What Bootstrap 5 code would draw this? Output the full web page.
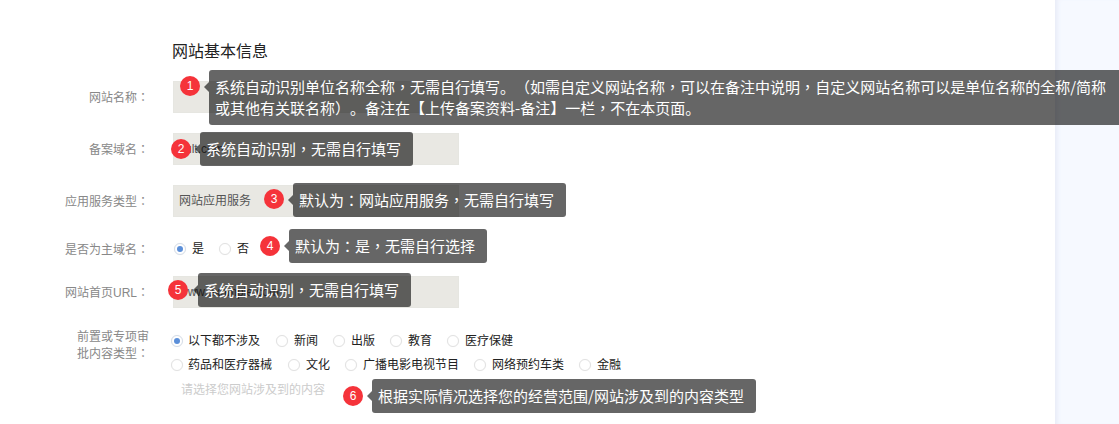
<!DOCTYPE html>
<html lang="zh-CN">
<head>
<meta charset="utf-8">
<title>网站基本信息</title>
<link rel="stylesheet" href="https://cdn.jsdelivr.net/npm/bootstrap@5.3.0/dist/css/bootstrap.min.css">
<style>
html,body{height:424px;overflow:hidden;background:#fff;}
body{font-family:"Liberation Sans","Noto Sans CJK SC",sans-serif;font-size:12px;color:#333;text-spacing-trim:space-all;}
.pn{font-family:"Noto Sans CJK TC",sans-serif;}
.pane{width:1055px;height:424px;padding-top:42px;position:relative;z-index:2;flex:none;}
.side{flex:1 1 auto;height:424px;background:#f6f9ff;box-shadow:inset 5px 0 5px -3px #e6e9f6;}
.sec-title{font-size:16px;line-height:20px;margin:0 0 19px 172px;color:#222;font-weight:400;}
.f-row{display:flex;align-items:center;position:relative;}
.f-label{width:149px;margin-right:24px;text-align:right;color:#888;line-height:16px;flex:none;}
.f-box{width:286px;height:32px;background:#e9e8e3;border:1px solid #e6e6e1;padding:0 5px;display:flex;align-items:center;color:#555;line-height:30px;overflow:hidden;white-space:nowrap;}
.r1,.r2{margin-bottom:20px;}
.r4{height:24px;margin-top:20px;margin-bottom:15px;}
.r5{margin-bottom:21px;}
.r6{align-items:flex-start;}
.opts{margin-left:-2px;}
.opt-line{height:24px;gap:15px;}
.opt{display:flex;align-items:center;gap:6px;color:#222;line-height:16px;}
.opt-line .opt:first-child{gap:5px;margin-right:1px;}
.dot{width:12px;height:12px;border-radius:50%;border:1px solid #e2e2e2;background:#fff;box-shadow:0 0 1px #eee;display:block;flex:none;position:relative;}
.dot.on{border-color:#d5dde8;}
.dot.on::after{content:"";position:absolute;left:2px;top:2px;width:6px;height:6px;border-radius:50%;background:#5b8fd9;}
.main-radios{gap:15px;margin-left:1px;}
.opt-hint{color:#ccc;margin:5px 0 0 10px;line-height:16px;}
.tip-wrap{position:absolute;display:flex;align-items:flex-start;z-index:5;}
.num{width:20px;height:20px;border-radius:50%;background:#f5333a;color:#fff;font-size:12px;line-height:20px;text-align:center;flex:none;}
.tip-txt{position:relative;background:rgba(0,0,0,.6);color:#fff;font-family:"Noto Sans CJK SC",sans-serif;font-size:15px;line-height:21px;padding:6px 12px 7px 6px;border-radius:3px;white-space:nowrap;}
.tip-txt::before{content:"";position:absolute;left:-5px;top:12px;border-style:solid;border-width:5px 5px 5px 0;border-color:transparent rgba(0,0,0,.6) transparent transparent;}
.tip-a{left:180px;top:-11px;gap:9px;}
.tip-a .num{margin-top:6px;}
.tip-a .tip-txt{padding-right:26px;}
.tip-b{left:171px;top:-1px;gap:9px;}
.tip-b .num{margin-top:7px;}
.tip-c{left:264px;top:-2px;gap:9px;}
.tip-c .num{margin-top:6px;}
.tip-d{left:260px;top:-8px;gap:9px;}
.tip-d .num{margin-top:7px;}
.tip-e{left:168px;top:-3px;gap:10px;}
.tip-e .num{margin-top:7px;}
.tip-f{left:343px;top:50px;gap:9px;}
.tip-f .num{margin-top:7px;}
</style>
</head>
<body>
<div class="d-flex">
  <div class="pane">
    <h2 class="sec-title">网站基本信息</h2>

    <div class="f-row r1">
      <div class="f-label">网站名称<span class="pn" lang="zh-Hant">：</span></div>
      <div class="f-box"></div>
      <div class="tip-wrap tip-a"><span class="num">1</span><div class="tip-txt">系统自动识别单位名称全称<span class="pn" lang="zh-Hant">，</span>无需自行填写。<span class="pn" lang="zh-Hant">（</span>如需自定义网站名称<span class="pn" lang="zh-Hant">，</span>可以在备注中说明<span class="pn" lang="zh-Hant">，</span>自定义网站名称可以是单位名称的全称/简称<br>或其他有关联名称<span class="pn" lang="zh-Hant">）</span>。备注在【上传备案资料-备注】一栏<span class="pn" lang="zh-Hant">，</span>不在本页面。</div></div>
    </div>

    <div class="f-row r2">
      <div class="f-label">备案域名<span class="pn" lang="zh-Hant">：</span></div>
      <div class="f-box">cult.com</div>
      <div class="tip-wrap tip-b"><span class="num">2</span><div class="tip-txt">系统自动识别<span class="pn" lang="zh-Hant">，</span>无需自行填写</div></div>
    </div>

    <div class="f-row r3">
      <div class="f-label">应用服务类型<span class="pn" lang="zh-Hant">：</span></div>
      <div class="f-box">网站应用服务</div>
      <div class="tip-wrap tip-c"><span class="num">3</span><div class="tip-txt">默认为<span class="pn" lang="zh-Hant">：</span>网站应用服务<span class="pn" lang="zh-Hant">，</span>无需自行填写</div></div>
    </div>

    <div class="f-row r4">
      <div class="f-label">是否为主域名<span class="pn" lang="zh-Hant">：</span></div>
      <div class="d-flex main-radios">
        <label class="opt"><span class="dot on"></span>是</label>
        <label class="opt"><span class="dot"></span>否</label>
      </div>
      <div class="tip-wrap tip-d"><span class="num">4</span><div class="tip-txt">默认为<span class="pn" lang="zh-Hant">：</span>是<span class="pn" lang="zh-Hant">，</span>无需自行选择</div></div>
    </div>

    <div class="f-row r5">
      <div class="f-label">网站首页URL<span class="pn" lang="zh-Hant">：</span></div>
      <div class="f-box">www.example.com</div>
      <div class="tip-wrap tip-e"><span class="num">5</span><div class="tip-txt">系统自动识别<span class="pn" lang="zh-Hant">，</span>无需自行填写</div></div>
    </div>

    <div class="f-row r6">
      <div class="f-label">前置或专项审<br>批内容类型<span class="pn" lang="zh-Hant">：</span></div>
      <div class="opts">
        <div class="d-flex opt-line">
          <label class="opt"><span class="dot on"></span>以下都不涉及</label>
          <label class="opt"><span class="dot"></span>新闻</label>
          <label class="opt"><span class="dot"></span>出版</label>
          <label class="opt"><span class="dot"></span>教育</label>
          <label class="opt"><span class="dot"></span>医疗保健</label>
        </div>
        <div class="d-flex opt-line">
          <label class="opt"><span class="dot"></span>药品和医疗器械</label>
          <label class="opt"><span class="dot"></span>文化</label>
          <label class="opt"><span class="dot"></span>广播电影电视节目</label>
          <label class="opt"><span class="dot"></span>网络预约车类</label>
          <label class="opt"><span class="dot"></span>金融</label>
        </div>
        <div class="opt-hint">请选择您网站涉及到的内容</div>
      </div>
      <div class="tip-wrap tip-f"><span class="num">6</span><div class="tip-txt">根据实际情况选择您的经营范围/网站涉及到的内容类型</div></div>
    </div>
  </div>
  <div class="side"></div>
</div>
<script src="https://cdn.jsdelivr.net/npm/bootstrap@5.3.0/dist/js/bootstrap.bundle.min.js"></script>
</body>
</html>
